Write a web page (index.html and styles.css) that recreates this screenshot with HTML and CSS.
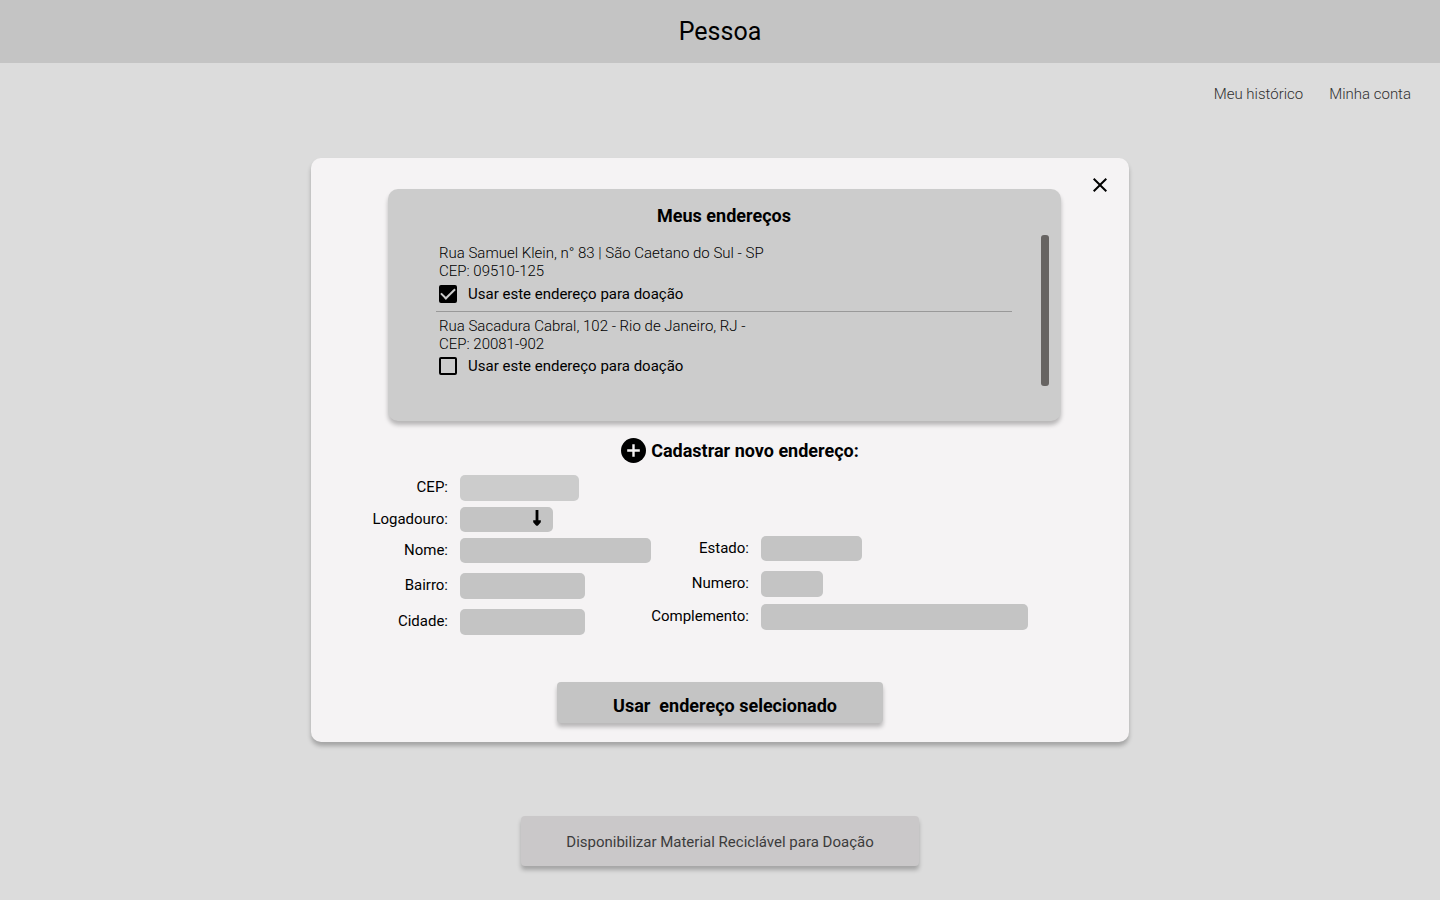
FILE: index.html
```html
<!DOCTYPE html>
<html lang="pt-BR">
<head>
  <meta charset="utf-8">
  <meta name="viewport" content="width=device-width, initial-scale=1">
  <title>Pessoa</title>
  <link rel="stylesheet" href="styles.css">
</head>
<body>
  <header class="topbar">
    <h1 class="topbar-title">Pessoa</h1>
  </header>

  <nav class="user-nav">
    <a class="user-link" href="#historico">Meu histórico</a>
    <a class="user-link" href="#conta">Minha conta</a>
  </nav>

  <main class="content">
    <section class="modal" role="dialog" aria-labelledby="addresses-title">
      <button class="close" type="button" aria-label="Fechar">
        <svg width="14" height="14" viewBox="0 0 14 14" fill="#000"><path d="M14 1.4 12.6 0 7 5.6 1.4 0 0 1.4 5.6 7 0 12.6 1.4 14 7 8.4 12.6 14 14 12.6 8.4 7z"/></svg>
      </button>

      <div class="addresses">
        <h2 class="section-title" id="addresses-title">Meus endereços</h2>
        <div class="address-scroll">
          <ul class="address-list">
            <li class="address">
              <p class="address-text">Rua Samuel Klein, n° 83 | São Caetano do Sul - SP<br>CEP: 09510-125</p>
              <label class="choice"><input class="check" type="checkbox" checked>Usar este endereço para doação</label>
            </li>
            <li class="address">
              <p class="address-text">Rua Sacadura Cabral, 102 - Rio de Janeiro, RJ -<br>CEP: 20081-902</p>
              <label class="choice"><input class="check" type="checkbox">Usar este endereço para doação</label>
            </li>
          </ul>
          <div class="scroll-thumb"></div>
        </div>
      </div>

      <form class="new-address">
        <h2 class="section-title new-title">
          <svg width="25" height="25" viewBox="0 0 25 25"><circle cx="12.5" cy="12.5" r="12.5" fill="#000"/><path d="M12.5 6.2v12.6M6.2 12.5h12.6" stroke="#f5f3f4" stroke-width="2.4"/></svg>
          Cadastrar novo endereço:
        </h2>

        <div class="fields">
          <div class="group group-street">
            <label for="cep">CEP:</label>
            <input class="field field-light w-cep" id="cep" type="text">
            <label for="logradouro">Logadouro:</label>
            <span class="select-wrap">
              <select class="field w-type" id="logradouro"><option></option></select>
              <svg class="arrow" width="8" height="16" viewBox="0 0 8 16"><path d="M2.6 0h2.8v10.3H7.8v2L5.2 15.2Q4 16.4 2.8 15.2L.2 12.3v-2h2.4z"/></svg>
            </span>
            <label for="nome">Nome:</label>
            <input class="field w-name" id="nome" type="text">
            <label for="bairro">Bairro:</label>
            <input class="field w-district" id="bairro" type="text">
            <label for="cidade">Cidade:</label>
            <input class="field w-district" id="cidade" type="text">
          </div>
          <div class="group group-details">
            <label for="estado">Estado:</label>
            <input class="field w-state" id="estado" type="text">
            <label for="numero">Numero:</label>
            <input class="field w-number" id="numero" type="text">
            <label for="complemento">Complemento:</label>
            <input class="field w-extra" id="complemento" type="text">
          </div>
        </div>

        <button class="button button-confirm" type="submit">Usar&nbsp; endereço selecionado</button>
      </form>
    </section>

    <button class="button button-donate" type="button">Disponibilizar Material Reciclável para Doação</button>
  </main>
</body>
</html>
```

FILE: styles.css
```css
* {
  box-sizing: border-box;
}

body {
  margin: 0;
  min-height: 100vh;
  background: #dcdcdc;
  color: #000;
  font-family: Roboto, "Liberation Sans", sans-serif;
  font-size: 15px;
  line-height: 18px;
}

h1,
h2,
p,
ul {
  margin: 0;
  padding: 0;
}

button,
input,
select {
  font: inherit;
  color: inherit;
}

.topbar {
  padding: 16px;
  background: #c4c4c4;
  text-align: center;
}

.topbar-title {
  font-size: 25px;
  font-weight: 400;
  line-height: 31px;
}

.user-nav {
  display: flex;
  justify-content: flex-end;
  gap: 26px;
  padding: 22px 29px 0;
}

.user-link {
  color: #303030;
  font-weight: 300;
  text-decoration: none;
}

.content {
  display: flex;
  flex-direction: column;
  align-items: center;
  gap: 74px;
  padding: 55px 16px 32px;
}

.modal {
  position: relative;
  width: 100%;
  max-width: 818px;
  padding: 31px 61px 19px;
  border-radius: 10px;
  background: #f5f3f4;
  box-shadow: 0 4px 4px rgba(0, 0, 0, 0.25);
}

.close {
  position: absolute;
  top: 15px;
  right: 17px;
  display: grid;
  place-items: center;
  width: 24px;
  height: 24px;
  padding: 0;
  border: 0;
  background: none;
  cursor: pointer;
}

.section-title {
  font-size: 18px;
  font-weight: 700;
  line-height: 22px;
  text-align: center;
}

.addresses {
  margin: 0 7px 0 16px;
  padding: 16px 12px 35px 48px;
  border-radius: 10px;
  background: #ccc;
  box-shadow: 0 4px 4px rgba(0, 0, 0, 0.25);
}

.addresses .section-title {
  padding-right: 37px;
}

.address-scroll {
  display: flex;
  justify-content: space-between;
  gap: 29px;
  margin-top: 8px;
}

.address-list {
  flex: 1;
  list-style: none;
}

.address {
  padding: 5px 3px 8px;
}

.address:first-child {
  padding-top: 9px;
  border-bottom: 1px solid #999;
}

.address-text {
  font-weight: 300;
}

.choice {
  display: flex;
  align-items: center;
  gap: 11px;
  margin-top: 5px;
}

.address:last-child .choice {
  margin-top: 4px;
}

.check {
  display: grid;
  place-items: center;
  appearance: none;
  width: 18px;
  height: 18px;
  margin: 0;
  border: 2px solid #000;
  border-radius: 2px;
}

.check:checked {
  background: #000;
}

.check:checked::before {
  content: "";
  width: 12px;
  height: 6px;
  border: solid #ccc;
  border-width: 0 0 2px 2px;
  transform: translateY(-2px) rotate(-45deg);
}

.scroll-thumb {
  width: 8px;
  height: 151px;
  border-radius: 3px;
  background: #676462;
}

.new-address {
  display: flex;
  flex-direction: column;
}

.new-title {
  display: flex;
  align-items: center;
  justify-content: center;
  gap: 5px;
  margin: 17px 0 12px 40px;
}

.fields {
  display: flex;
  flex-wrap: wrap;
}

.group {
  display: grid;
  column-gap: 12px;
  align-items: start;
}

.group label {
  line-height: 24px;
  text-align: right;
}

.group-street {
  grid-template-columns: 76px 191px;
  grid-template-rows: 32px 31px 35px 36px 26px;
}

.group-street label {
  line-height: 25px;
}

.group-details {
  grid-template-columns: 98px auto;
  grid-template-rows: 35px 33px 26px;
  margin-top: 61px;
}

.group-details label {
  line-height: 25px;
}

.field {
  height: 26px;
  padding: 0 6px;
  border: 0;
  border-radius: 5px;
  background: #c4c4c4;
}

.field-light {
  background: #ccc;
}

.select-wrap {
  position: relative;
  justify-self: start;
  display: flex;
}

.select-wrap .field {
  appearance: none;
}

.w-type,
.w-name,
.w-state {
  height: 25px;
}

.arrow {
  position: absolute;
  top: 3px;
  right: 12px;
  pointer-events: none;
}

.w-cep {
  width: 119px;
}

.w-type {
  width: 93px;
}

.w-name {
  width: 191px;
}

.w-district {
  width: 125px;
}

.w-state {
  width: 101px;
}

.w-number {
  width: 62px;
}

.w-extra {
  width: 267px;
}

.button {
  border: 0;
  border-radius: 4px;
  box-shadow: 0 4px 4px rgba(0, 0, 0, 0.25);
  cursor: pointer;
}

.button-confirm {
  align-self: center;
  margin-top: 47px;
  padding: 13px 46px 6px 56px;
  background: #c4c4c4;
  font-size: 18px;
  font-weight: 700;
  line-height: 22px;
}

.button-donate {
  padding: 17px 45px 15px;
  background: #cac8c9;
  color: #3c3c3c;
}
```
